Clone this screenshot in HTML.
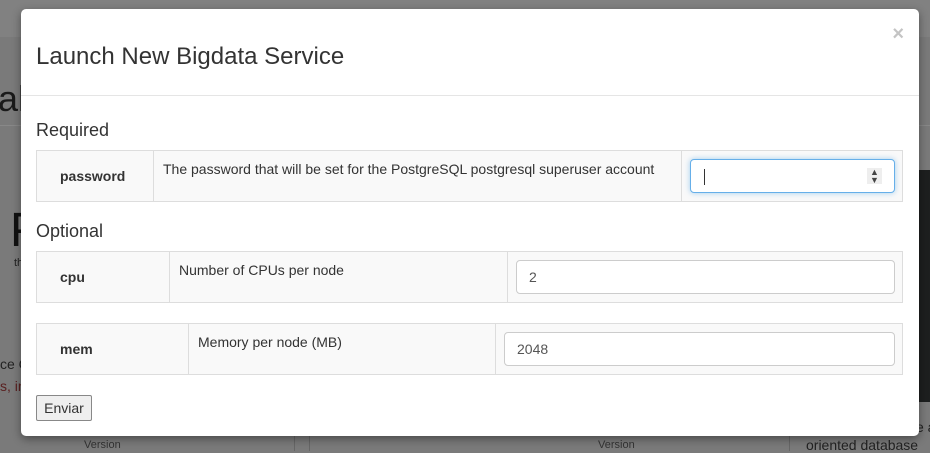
<!DOCTYPE html>
<html><head><meta charset="utf-8"><style>
*{box-sizing:border-box}
body{margin:0;width:930px;height:451px;overflow:hidden;background:#7a7a7a;font-family:"Liberation Sans",Arial,sans-serif;position:relative}
.abs{position:absolute;white-space:nowrap}
.modal{position:absolute;left:21px;top:9px;width:898px;height:427px;background:#fff;border-radius:5px;box-shadow:0 3px 9px rgba(0,0,0,.4)}
.row{position:absolute;left:36px;width:867px;height:52px;border:1px solid #ddd;background:#f9f9f9}
.cell{position:absolute;top:0;height:50px;border-right:1px solid #ddd}
.lab{font-weight:bold;font-size:14px;color:#333;position:absolute;left:23px;top:17px}
.desc{font-size:14px;color:#333;position:absolute;top:10px;left:9px;white-space:nowrap}
.inp{position:absolute;height:34px;background:#fff;border:1px solid #ccc;border-radius:4px;font-size:14px;color:#555;padding:8px 12px}
h4{position:absolute;margin:0;font-weight:normal;font-size:18px;color:#333}
</style></head><body>
<div class="abs" style="left:0;top:0;width:930px;height:37px;background:#818181"></div>
<div class="abs" style="left:0;top:125px;width:930px;height:1px;background:#888"></div>
<div class="abs" style="left:-2px;top:78px;font-size:36px;color:#1a1a1a">al</div>
<div class="abs" style="left:10px;top:203px;font-size:48px;color:#111">P</div>
<div class="abs" style="left:14px;top:257px;font-size:11px;color:#222">th</div>
<div class="abs" style="left:0;top:356px;font-size:14px;color:#222">ce C</div>
<div class="abs" style="left:0;top:378px;font-size:14px;color:#5a2020">s, in</div>
<div class="abs" style="left:84px;top:439px;font-size:11px;color:#333">Version</div>
<div class="abs" style="left:598px;top:439px;font-size:11px;color:#333">Version</div>
<div class="abs" style="left:294px;top:436px;width:1px;height:15px;background:#666"></div>
<div class="abs" style="left:309px;top:436px;width:1px;height:15px;background:#666"></div>
<div class="abs" style="left:789px;top:436px;width:1px;height:15px;background:#666"></div>
<div class="abs" style="left:919px;top:170px;width:11px;height:232px;background:#1d1f1f"></div>
<div class="abs" style="left:806px;top:437px;font-size:14px;color:#222">oriented database</div>
<div class="abs" style="left:916px;top:419px;font-size:14px;color:#222">e a</div>
<div class="modal">
 <div class="abs" style="left:15px;top:34px;font-size:24px;color:#333">Launch New Bigdata Service</div>
 <div class="abs" style="right:15px;top:14px;font-size:20px;font-weight:bold;color:#c4c4c4">×</div>
 <div class="abs" style="left:0;top:86px;width:898px;height:1px;background:#e5e5e5"></div>
</div>
<h4 style="left:36px;top:120px">Required</h4>
<div class="row" style="top:150px">
 <div class="cell" style="left:0;width:117px"><span class="lab">password</span></div>
 <div class="cell" style="left:117px;width:528px"><span class="desc">The password that will be set for the PostgreSQL postgresql superuser account</span></div>
 <div class="inp" style="left:653px;top:8px;width:205px;border-color:#66afe9;box-shadow:0 0 6px rgba(102,175,233,.6)">
  <div class="abs" style="left:13px;top:9px;width:1px;height:16px;background:#333"></div>
  <div class="abs" style="left:176px;top:8px;width:15px;height:16px;background:#eee;font-size:9px;line-height:8px;text-align:center;color:#444">▲<br>▼</div>
 </div>
</div>
<h4 style="left:36px;top:221px">Optional</h4>
<div class="row" style="top:251px">
 <div class="cell" style="left:0;width:133px"><span class="lab">cpu</span></div>
 <div class="cell" style="left:133px;width:338px"><span class="desc">Number of CPUs per node</span></div>
 <div class="inp" style="left:479px;top:8px;width:379px">2</div>
</div>
<div class="row" style="top:323px">
 <div class="cell" style="left:0;width:152px"><span class="lab">mem</span></div>
 <div class="cell" style="left:152px;width:307px"><span class="desc">Memory per node (MB)</span></div>
 <div class="inp" style="left:467px;top:8px;width:391px">2048</div>
</div>
<div class="abs" style="left:36px;top:395px;width:56px;height:26px;border:1px solid #888;border-radius:2px;background:#efefef;font-size:14px;color:#333;text-align:center;line-height:24px">Enviar</div>
</body></html>
